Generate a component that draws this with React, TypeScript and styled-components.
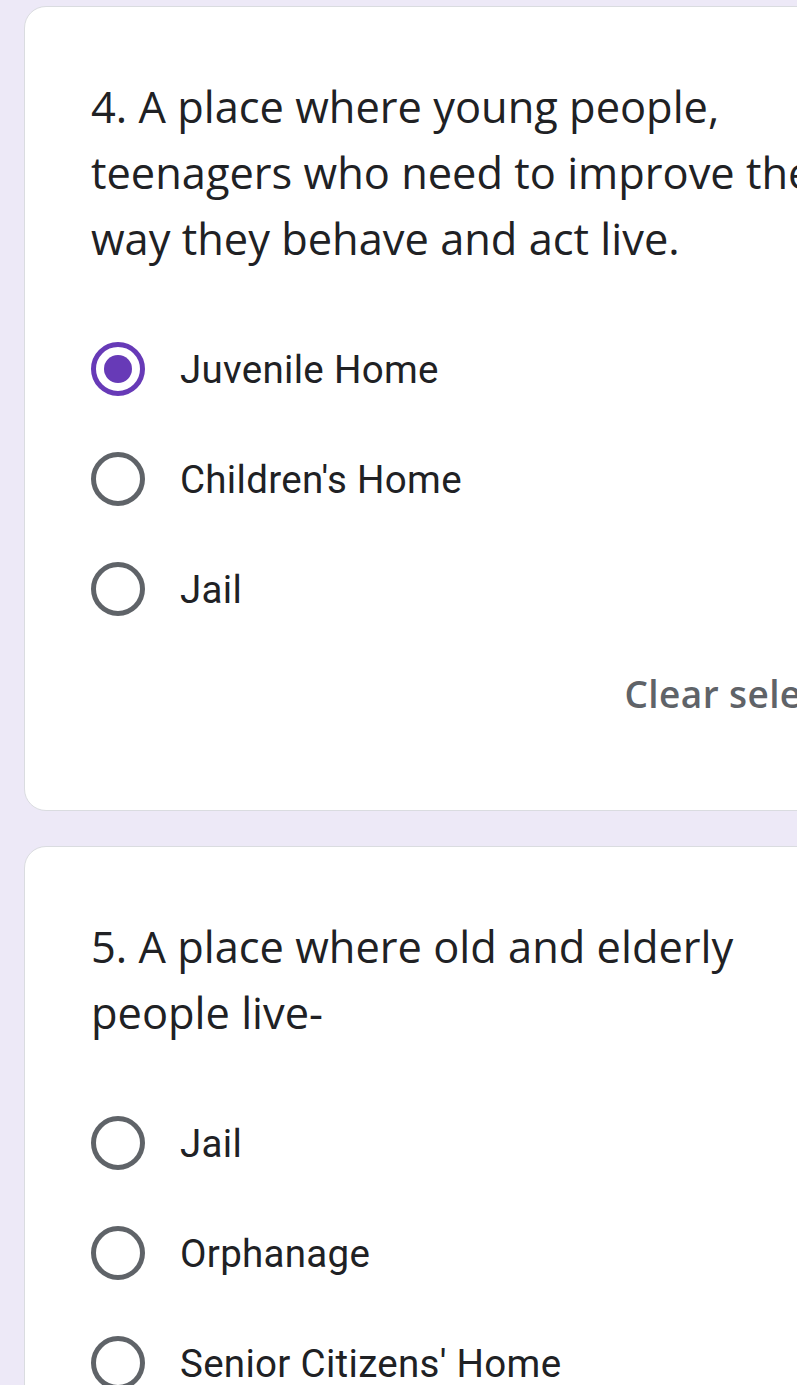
import React from "react";
import styled, { createGlobalStyle } from "styled-components";

const Global = createGlobalStyle`
  html, body {
    margin: 0;
    padding: 0;
    overflow: hidden;
    background: #ede9f7;
  }
  * { box-sizing: border-box; }
`;

const Page = styled.div`
  width: 797px;
  height: 1385px;
  overflow: hidden;
  background: #ede9f7;
  padding: 6px 0 0 24px;
  display: flex;
  flex-direction: column;
  gap: 35px;
`;

const Card = styled.section`
  flex: none;
  width: 958px;
  background: #ffffff;
  border: 1px solid #dadce0;
  border-radius: 22px;
  padding: 67px 66px 67px 66px;
  display: flex;
  flex-direction: column;
`;

const Title = styled.div`
  width: 770px;
  font-family: "Open Sans", sans-serif;
  font-size: 43.4px;
  line-height: 66px;
  color: #202124;
  margin-bottom: 42px;
`;

const Options = styled.div`
  display: flex;
  flex-direction: column;
`;

const Row = styled.label`
  height: 110px;
  display: flex;
  align-items: center;
  gap: 35px;
`;

const Radio = styled.span<{ $checked?: boolean }>`
  flex: none;
  width: 54px;
  height: 54px;
  border-radius: 50%;
  border: 5px solid ${(p) => (p.$checked ? "#673ab7" : "#5f6368")};
  display: flex;
  align-items: center;
  justify-content: center;
  &::after {
    content: "";
    width: 28px;
    height: 28px;
    border-radius: 50%;
    background: #673ab7;
    display: ${(p) => (p.$checked ? "block" : "none")};
  }
`;

const OptionText = styled.span`
  font-family: "Roboto", sans-serif;
  font-size: 38.5px;
  color: #202124;
  letter-spacing: 0.3px;
`;

const Footer = styled.div`
  height: 99px;
  display: flex;
  align-items: center;
  justify-content: flex-end;
`;

const ClearButton = styled.button`
  border: none;
  background: none;
  padding: 0 22px;
  font-family: "Open Sans", sans-serif;
  font-weight: 600;
  font-size: 37px;
  color: #5f6368;
  letter-spacing: 0.4px;
`;

type Q = { title: string; options: string[]; selected?: number; clear?: boolean };

const questions: Q[] = [
  {
    title: "4. A place where young people, teenagers who need to improve their way they behave and act live.",
    options: ["Juvenile Home", "Children's Home", "Jail"],
    selected: 0,
    clear: true,
  },
  {
    title: "5. A place where old and elderly people live-",
    options: ["Jail", "Orphanage", "Senior Citizens' Home"],
  },
];

export default function App() {
  return (
    <>
      <Global />
      <Page>
        {questions.map((q, qi) => (
          <Card key={qi}>
            <Title>{q.title}</Title>
            <Options>
              {q.options.map((o, oi) => (
                <Row key={oi}>
                  <Radio $checked={q.selected === oi} />
                  <OptionText>{o}</OptionText>
                </Row>
              ))}
            </Options>
            {q.clear && (
              <Footer>
                <ClearButton>Clear selection</ClearButton>
              </Footer>
            )}
          </Card>
        ))}
      </Page>
    </>
  );
}
